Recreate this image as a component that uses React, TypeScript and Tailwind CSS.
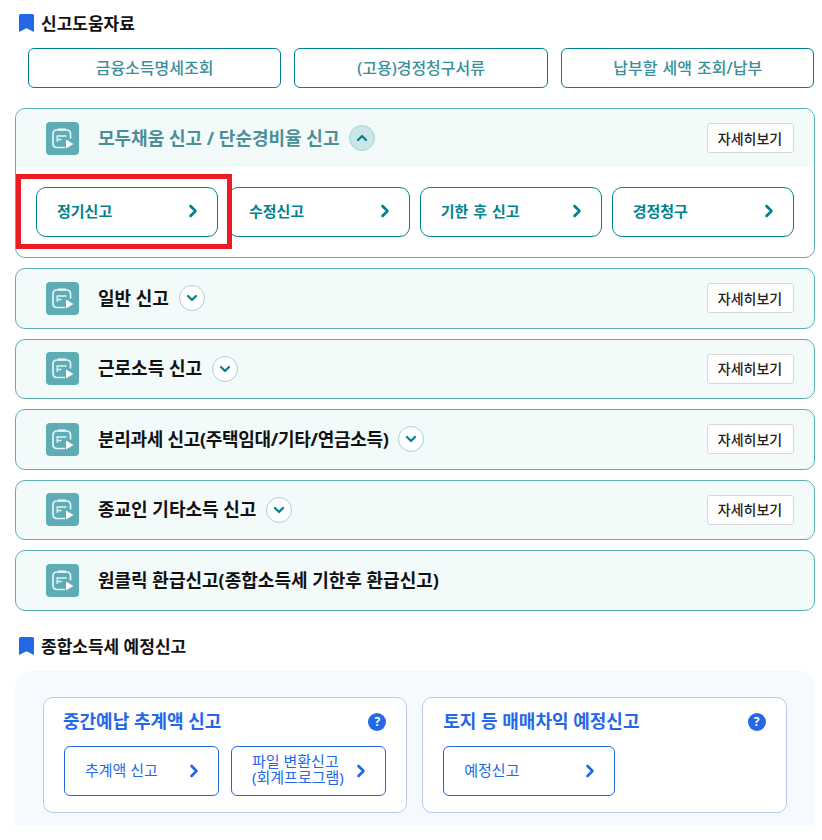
import React from 'react'
import { ChevronRight, ChevronDown, ChevronUp } from 'lucide-react'

const font = "font-['Noto_Sans','Noto_Sans_CJK_KR',sans-serif]"

function Bookmark() {
  return (
    <svg width="15" height="18" viewBox="0 0 15 18" className="shrink-0">
      <path d="M1.500 0h12A1.500 1.500 0 0 1 15 1.500V18l-7.500-3.800L0 18V1.500A1.500 1.500 0 0 1 1.500 0z" fill="#2468e8" />
    </svg>
  )
}

function ReportIcon() {
  return (
    <div className="h-[33px] w-[33px] shrink-0 rounded-[4px] bg-[#5eadb6]">
      <svg width="33" height="33" viewBox="0 0 33 33" fill="none">
        <path d="M19 25.500h-8.500a3.500 3.500 0 0 1-3.500-3.500V11.500A3.500 3.500 0 0 1 10.500 8h10.500A3.500 3.500 0 0 1 24.500 11.500v5" stroke="#e6f4f5" strokeWidth="1.700" />
        <path d="M12 7.500h8" stroke="#e6f4f5" strokeWidth="2.200" />
        <path d="M10.500 14h10M10.500 17.500h5M11.200 14v6" stroke="#e6f4f5" strokeWidth="1.300" />
        <path d="M20 17.500l7.500 4.500-7.500 4.500z" fill="#fff" />
      </svg>
    </div>
  )
}

function DetailButton() {
  return (
    <button className="flex h-[30px] w-[87px] shrink-0 items-center justify-center rounded-[3px] border border-[#d8d8d8] bg-white text-[14px] font-medium text-[#222]">
      자세히보기
    </button>
  )
}

function Toggle({ open }: { open?: boolean }) {
  return (
    <span
      className={`ml-[10px] flex h-[26px] w-[26px] shrink-0 items-center justify-center rounded-full border border-[#a9d2d6] ${open ? 'bg-[#cbe6e8]' : 'bg-white'}`}
    >
      {open ? (
        <ChevronUp size={16} strokeWidth={3.4} className="text-[#00838f]" />
      ) : (
        <ChevronDown size={16} strokeWidth={3.4} className="text-[#00838f]" />
      )}
    </span>
  )
}

function Row({ title, toggle = true, detail = true, tight }: { title: string; toggle?: boolean; detail?: boolean; tight?: boolean }) {
  return (
    <div className="flex h-[60.5px] items-center rounded-[10px] border border-[#5eadb6] bg-[#f2fbfa] pl-[30px] pr-[20px]">
      <ReportIcon />
      <span className={`ml-[19px] text-[18px] font-bold text-[#111] ${tight ? 'tracking-[-0.3px]' : ''}`}>{title}</span>
      {toggle && <Toggle />}
      <div className="flex-1" />
      {detail && <DetailButton />}
    </div>
  )
}

function SubButton({ label }: { label: string }) {
  return (
    <button className="flex h-[50px] flex-1 items-center justify-between rounded-[10px] border border-[#00838f] bg-white pb-[2px] pl-[20px] pr-[14px] text-[15px] font-bold [word-spacing:1px] text-[#00838f]">
      <span>{label}</span>
      <ChevronRight size={20} strokeWidth={3.2} />
    </button>
  )
}

function BlueButton({ label, sub, className }: { label: string; sub?: string; className: string }) {
  return (
    <button className={`flex h-[50px] items-center justify-between rounded-[6px] border border-[#2468e8] bg-white pl-[20px] pr-[14px] text-left text-[15px] leading-[16px] text-[#2468e8] ${className}`}>
      <span className={sub ? 'pb-[4px]' : 'pb-[2px]'}>
        {label}
        {sub && <br />}
        {sub}
      </span>
      <ChevronRight size={20} strokeWidth={3.2} className="shrink-0" />
    </button>
  )
}

function Help() {
  return (
    <span className="flex h-[18px] w-[18px] items-center justify-center rounded-full bg-[#2468e8] text-[12px] font-bold text-white">?</span>
  )
}

export default function App() {
  return (
    <div className={`h-[840px] w-[822px] bg-white pl-[15px] pr-[7.5px] pt-[14px] ${font}`}>
      <div className="flex h-[18px] items-center gap-[7px] pl-[4px]">
        <Bookmark />
        <h2 className="mt-[2px] text-[17px] font-bold text-[#111]">신고도움자료</h2>
      </div>

      <div className="mt-[16px] flex gap-[13px] pl-[12.75px]">
        {['금융소득명세조회', '(고용)경정청구서류', '납부할 세액 조회/납부'].map((t) => (
          <button key={t} className="h-[40px] flex-1 rounded-[6px] border border-[#00838f] bg-white text-[16px] font-medium [word-spacing:1px] text-[#3a8f9a]">
            {t}
          </button>
        ))}
      </div>

      <div className="relative mt-[20px] h-[150px] overflow-visible rounded-[10px] border border-[#5eadb6] bg-white">
        <div className="flex h-[58px] items-center rounded-t-[10px] bg-[#f2fbfa] pl-[30px] pr-[20px]">
          <ReportIcon />
          <span className="ml-[19px] text-[18px] font-bold text-[#4a8f98]">모두채움 신고 / 단순경비율 신고</span>
          <Toggle open />
          <div className="flex-1" />
          <DetailButton />
        </div>
        <div className="mt-[20px] flex gap-[10px] px-[20px]">
          <SubButton label="정기신고" />
          <SubButton label="수정신고" />
          <SubButton label="기한 후 신고" />
          <SubButton label="경정청구" />
        </div>
        <div className="absolute left-[0px] top-[65px] h-[75px] w-[216px] border-[5px] border-[#ed1c24]" />
      </div>

      <div className="mt-[10px] flex flex-col gap-[10px]">
        <Row title="일반 신고" />
        <Row title="근로소득 신고" />
        <Row title="분리과세 신고(주택임대/기타/연금소득)" tight />
        <Row title="종교인 기타소득 신고" />
        <Row title="원클릭 환급신고(종합소득세 기한후 환급신고)" toggle={false} detail={false} />
      </div>

      <div className="mt-[26px] flex h-[18px] items-center gap-[7px] pl-[4px]">
        <Bookmark />
        <h2 className="mt-[2px] text-[17px] font-bold text-[#111]">종합소득세 예정신고</h2>
      </div>

      <div className="mt-[16px] flex h-[154px] gap-[15px] rounded-t-[16px] bg-[#f6f9fe] pl-[28px] pr-[28px] pt-[26px]">
        <div className="h-[116px] flex-1 rounded-[10px] border border-[#bcc8ec] bg-white px-[20px] pt-[11px]">
          <div className="flex h-[26px] items-center justify-between">
            <span className="-ml-[1px] text-[18px] font-bold text-[#2468e8]">중간예납 추계액 신고</span>
            <Help />
          </div>
          <div className="mt-[11px] flex gap-[12px]">
            <BlueButton label="추계액 신고" className="w-[155px]" />
            <BlueButton label="파일 변환신고" sub="(회계프로그램)" className="w-[155px]" />
          </div>
        </div>
        <div className="h-[116px] flex-1 rounded-[10px] border border-[#bcc8ec] bg-white px-[20px] pt-[11px]">
          <div className="flex h-[26px] items-center justify-between">
            <span className="text-[18px] font-bold text-[#2468e8]">토지 등 매매차익 예정신고</span>
            <Help />
          </div>
          <div className="mt-[11px] flex gap-[12px]">
            <BlueButton label="예정신고" className="w-[172px]" />
          </div>
        </div>
      </div>
    </div>
  )
}
